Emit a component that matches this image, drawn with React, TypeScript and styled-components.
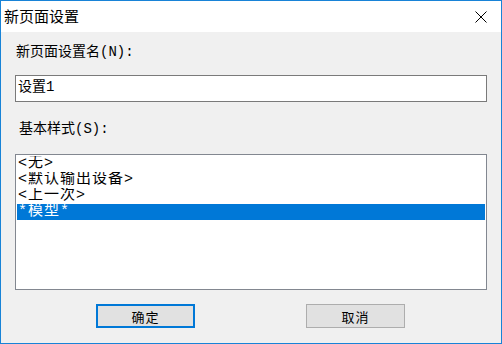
import styled, { createGlobalStyle } from 'styled-components';

const GlobalStyle = createGlobalStyle`
  html, body {
    margin: 0;
    padding: 0;
    background: #ffffff;
  }
  * {
    box-sizing: border-box;
  }
`;

const cjk = `"Noto Sans CJK SC", "Noto Sans", sans-serif`;
// SimSun-like: fixed-width latin, CJK falls through to Noto
const song = `"Liberation Mono", "Noto Sans CJK SC", monospace`;

const Window = styled.div`
  width: 502px;
  height: 344px;
  border: 1px solid #1883d7;
  display: flex;
  flex-direction: column;
  font-family: ${cjk};
  color: #000;
  overflow: hidden;
`;

const TitleBar = styled.div`
  height: 31px;
  flex: none;
  background: #ffffff;
  display: flex;
  align-items: center;
  justify-content: space-between;
  padding: 0 14px 0 3px;
`;

const Title = styled.span`
  font-size: 15px;
  line-height: 18px;
  margin-top: -1px;
`;

const CloseButton = styled.div`
  width: 12px;
  height: 12px;
  display: flex;
  margin-top: 1px;
`;

const Body = styled.div`
  flex: 1;
  background: #f0f0f0;
  display: flex;
  flex-direction: column;
  padding: 0 14px;
  font-family: ${song};
`;

const Label = styled.div<{ $indent?: number; $top: number }>`
  font-size: 14px;
  line-height: 16px;
  margin-top: ${(p) => p.$top}px;
  padding-left: ${(p) => p.$indent ?? 1}px;
`;

const TextBox = styled.div`
  margin-top: 15px;
  height: 27px;
  width: 472px;
  background: #ffffff;
  border: 1px solid #7a7a7a;
  font-size: 14px;
  line-height: 16px;
  padding: 3px 2px;
`;

const ListBox = styled.div`
  margin-top: 17px;
  height: 136px;
  width: 472px;
  background: #ffffff;
  border: 1px solid #828790;
  padding: 1px 1px;
`;

const ListItem = styled.div<{ $selected?: boolean }>`
  height: 16px;
  font-size: 15px;
  line-height: 16px;
  padding-left: 1px;
  letter-spacing: 1px;
  white-space: nowrap;
  overflow: hidden;
  background: ${(p) => (p.$selected ? '#0078d7' : 'transparent')};
  color: ${(p) => (p.$selected ? '#ffffff' : '#000000')};
`;

const ButtonRow = styled.div`
  margin-top: 14px;
  display: flex;
  padding-left: 81px;
  gap: 111px;
`;

const Button = styled.div<{ $default?: boolean }>`
  width: 99px;
  height: 24px;
  background: #e1e1e1;
  border: ${(p) => (p.$default ? '2px solid #0078d7' : '1px solid #adadad')};
  display: flex;
  align-items: center;
  justify-content: center;
  font-family: ${cjk};
  font-size: 13px;
  letter-spacing: 1px;
`;

const items = ['<无>', '<默认输出设备>', '<上一次>', '*模型*'];

const App = () => {
  return (
    <>
      <GlobalStyle />
      <Window>
        <TitleBar>
          <Title>新页面设置</Title>
          <CloseButton>
            <svg width="12" height="12" viewBox="0 0 12 12">
              <path d="M0.5 0.5 L11.5 11.5 M11.5 0.5 L0.5 11.5" stroke="#000" strokeWidth="1" fill="none" />
            </svg>
          </CloseButton>
        </TitleBar>
        <Body>
          <Label $top={12}>新页面设置名(N):</Label>
          <TextBox>设置1</TextBox>
          <Label $top={19} $indent={4}>基本样式(S):</Label>
          <ListBox>
            {items.map((item, i) => (
              <ListItem key={item} $selected={i === 3}>
                {item}
              </ListItem>
            ))}
          </ListBox>
          <ButtonRow>
            <Button $default>确定</Button>
            <Button>取消</Button>
          </ButtonRow>
        </Body>
      </Window>
    </>
  );
};

export default App;
